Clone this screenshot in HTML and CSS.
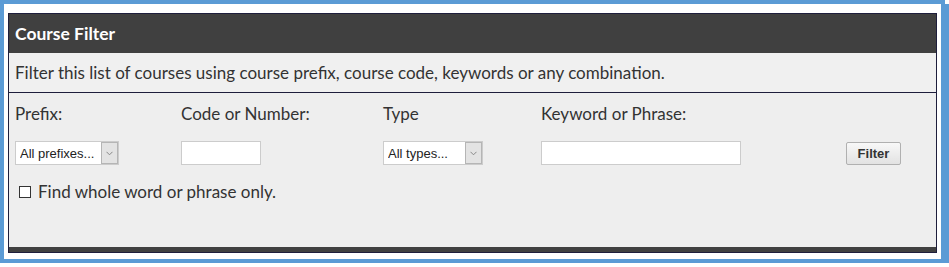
FILE: index.html
```html
<!DOCTYPE html>
<html lang="en">
<head>
  <meta charset="UTF-8">
  <meta name="viewport" content="width=device-width, initial-scale=1.0">
  <title>Course Filter</title>
  <link rel="stylesheet" href="styles.css">
</head>
<body>
  <div class="frame">
    <div class="panel">
      <h2 class="panel-head">Course Filter</h2>
      <p class="panel-desc">Filter this list of courses using course prefix, course code, keywords or any combination.</p>

      <form class="filter-form">
        <div class="filter-grid">
          <label class="field-label" for="prefix">Prefix:</label>
          <label class="field-label" for="code">Code or Number:</label>
          <label class="field-label" for="type">Type</label>
          <label class="field-label" for="keyword">Keyword or Phrase:</label>
          <span></span>

          <span class="select-wrap">
            <select id="prefix" class="select">
              <option>All prefixes...</option>
            </select>
            <span class="select-arrow">
              <svg width="7" height="5" viewBox="0 0 7 5"><polyline points="0.5,0.8 3.5,3.8 6.5,0.8" fill="none" stroke="#888" stroke-width="1"/></svg>
            </span>
          </span>
          <input type="text" id="code" class="text-input code-input">
          <span class="select-wrap">
            <select id="type" class="select">
              <option>All types...</option>
            </select>
            <span class="select-arrow">
              <svg width="7" height="5" viewBox="0 0 7 5"><polyline points="0.5,0.8 3.5,3.8 6.5,0.8" fill="none" stroke="#888" stroke-width="1"/></svg>
            </span>
          </span>
          <input type="text" id="keyword" class="text-input keyword-input">
          <button type="button" class="filter-btn">Filter</button>
        </div>

        <label class="check-row">
          <input type="checkbox" class="check-box">
          <span>Find whole word or phrase only.</span>
        </label>
      </form>

      <div class="panel-foot"></div>
    </div>
  </div>
</body>
</html>
```

FILE: styles.css
```css
/* Course filter panel */
body {
  margin: 0;
  padding: 0;
  background: #ffffff;
  font-family: Lato, "Liberation Sans", sans-serif;
}

.frame {
  width: 929px;
  height: 240px;
  border: 4px solid #5b9bd5;
  box-shadow: 4px 4px 0 #5b9bd5;
  background: #ffffff;
  padding: 9px 4px 6px 4px;
}

.panel {
  box-sizing: border-box;
  border: 1px solid #1e1e3c;
  background: #eeeeee;
  height: 240px;
  display: flex;
  flex-direction: column;
}

.panel-head {
  margin: 0;
  height: 39px;
  background: #404040;
  color: #ffffff;
  font-size: 17.5px;
  font-weight: bold;
  line-height: 39px;
  padding-left: 6px;
}

.panel-desc {
  margin: 0;
  height: 39px;
  line-height: 40px;
  background: #f0f0f0;
  border-bottom: 1px solid #1e1e3c;
  color: #333333;
  font-size: 17px;
  padding-left: 6px;
}

.filter-form {
  flex: 1;
  padding: 10px 6px 0 6px;
}

.filter-grid {
  display: grid;
  grid-template-columns: 166px 202px 158px 305px auto;
  grid-template-rows: 20px 24px;
  row-gap: 18px;
  align-items: center;
}

.field-label {
  font-size: 17px;
  color: #333333;
}

.select-wrap {
  position: relative;
  justify-self: start;
  display: inline-block;
  height: 24px;
}

.select {
  appearance: none;
  -webkit-appearance: none;
  display: block;
  width: 104px;
  height: 24px;
  border: 1px solid #cccccc;
  border-radius: 0;
  background: #ffffff;
  font-family: "Liberation Sans", Arial, sans-serif;
  font-size: 13px;
  color: #222222;
  padding: 0 0 0 4px;
  margin: 0;
}

#type {
  width: 100px;
}

.select-arrow {
  position: absolute;
  top: 1px;
  right: 1px;
  width: 15px;
  height: 20px;
  border: 1px solid #b5b5b5;
  background: #e3e3e3;
  display: flex;
  align-items: center;
  justify-content: center;
  pointer-events: none;
}

.text-input {
  box-sizing: border-box;
  height: 24px;
  border: 1px solid #cccccc;
  background: #ffffff;
  margin: 0;
  padding: 0 4px;
}

.code-input {
  width: 80px;
}

.keyword-input {
  width: 200px;
}

.filter-btn {
  justify-self: start;
  width: 55px;
  height: 23px;
  border: 1px solid #b0b0b0;
  border-radius: 2px;
  background: linear-gradient(#f8f8f8, #e2e2e2);
  font-family: "Liberation Sans", Arial, sans-serif;
  font-size: 13px;
  font-weight: bold;
  color: #333333;
  padding: 0;
}

.check-row {
  display: flex;
  align-items: center;
  gap: 7px;
  margin-top: 16px;
  padding-left: 4px;
  font-size: 17px;
  color: #333333;
}

.check-box {
  appearance: none;
  -webkit-appearance: none;
  width: 12px;
  height: 12px;
  margin: 0;
  border: 1px solid #333333;
  background: #ffffff;
}

.panel-foot {
  height: 5px;
  background: #404040;
}
```
